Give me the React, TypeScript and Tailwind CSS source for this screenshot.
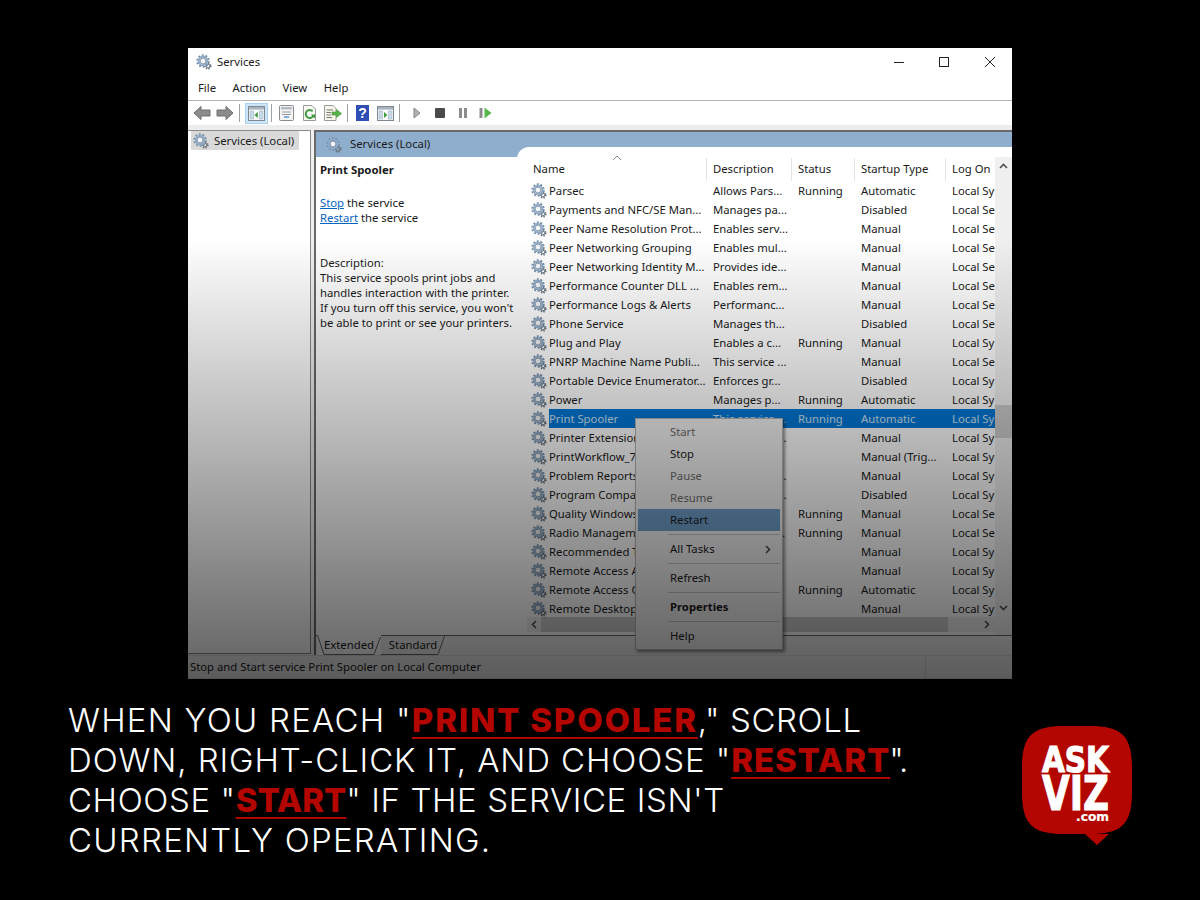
import React from "react";

const UI = "font-['Noto_Sans',sans-serif] text-[11.3px] text-[#1a1a1a]";

type Row = [string, string, string, string, string];

const rows: Row[] = [
  ["Parsec", "Allows Pars...", "Running", "Automatic", "Local Sy"],
  ["Payments and NFC/SE Man...", "Manages pa...", "", "Disabled", "Local Se"],
  ["Peer Name Resolution Prot...", "Enables serv...", "", "Manual", "Local Se"],
  ["Peer Networking Grouping", "Enables mul...", "", "Manual", "Local Se"],
  ["Peer Networking Identity M...", "Provides ide...", "", "Manual", "Local Se"],
  ["Performance Counter DLL ...", "Enables rem...", "", "Manual", "Local Se"],
  ["Performance Logs & Alerts", "Performanc...", "", "Manual", "Local Se"],
  ["Phone Service", "Manages th...", "", "Disabled", "Local Se"],
  ["Plug and Play", "Enables a c...", "Running", "Manual", "Local Sy"],
  ["PNRP Machine Name Publi...", "This service ...", "", "Manual", "Local Se"],
  ["Portable Device Enumerator...", "Enforces gr...", "", "Disabled", "Local Sy"],
  ["Power", "Manages p...", "Running", "Automatic", "Local Sy"],
  ["Print Spooler", "This service ...", "Running", "Automatic", "Local Sy"],
  ["Printer Extensions and...", "This service ...", "", "Manual", "Local Sy"],
  ["PrintWorkflow_7a2f1", "Provides su", "", "Manual (Trig...", "Local Sy"],
  ["Problem Reports Control", "This service ...", "", "Manual", "Local Sy"],
  ["Program Compatibility", "This service ...", "", "Disabled", "Local Sy"],
  ["Quality Windows Audio", "Quality Win", "Running", "Manual", "Local Se"],
  ["Radio Management", "Radio Mana...", "Running", "Manual", "Local Se"],
  ["Recommended Trouble", "Enables aut", "", "Manual", "Local Sy"],
  ["Remote Access Auto", "Creates a c...", "", "Manual", "Local Sy"],
  ["Remote Access Connection", "Manages di", "Running", "Automatic", "Local Sy"],
  ["Remote Desktop Config", "Remote De...", "", "Manual", "Local Sy"],
];

function Gear({ size = 16 }: { size?: number }) {
  return (
    <svg width={size} height={size} viewBox="0 0 16 16" className="shrink-0">
      <circle cx="12" cy="12" r="2.6" fill="none" stroke="#5f6b78" strokeWidth="1.9" strokeDasharray="1.2 1.2" />
      <circle cx="12" cy="12" r="1.9" fill="none" stroke="#6c7783" strokeWidth="1" />
      <circle cx="7" cy="7" r="5.6" fill="none" stroke="#7d92a8" strokeWidth="2.2" strokeDasharray="1.9 1.6" />
      <circle cx="7" cy="7" r="4.3" fill="none" stroke="#8daac8" strokeWidth="1.9" />
      <circle cx="7" cy="7" r="2.9" fill="#f3f6f9" stroke="#5e7288" strokeWidth="0.7" />
    </svg>
  );
}

function Arrow({ flip }: { flip?: boolean }) {
  return (
    <svg width="18" height="16" viewBox="0 0 18 16" className={flip ? "-scale-x-100" : ""}>
      <path d="M1 8 L8 1.5 V5 H17 V11 H8 V14.5 Z" fill="#8c8c8c" stroke="#6e6e6e" strokeWidth="1" strokeLinejoin="round" />
    </svg>
  );
}

function ConsolePanel({ accent }: { accent: "left" | "right" }) {
  return (
    <svg width="17" height="15" viewBox="0 0 17 15">
      <rect x="0.5" y="0.5" width="16" height="14" fill="#fdfdfd" stroke="#7f8890" />
      <rect x="1" y="1" width="15" height="2.6" fill="#a9b4bf" />
      <rect x="2" y="5" width="3.5" height="8" fill="#c8dbe9" stroke="#93a5b5" strokeWidth="0.5" />
      <rect x="11.5" y="5" width="3.5" height="8" fill="#c8dbe9" stroke="#93a5b5" strokeWidth="0.5" />
      {accent === "left" ? (
        <path d="M9.8 6 V12 L6.4 9 Z" fill="#3e9b3e" />
      ) : (
        <path d="M7 6 V12 L10.4 9 Z" fill="#3e9b3e" />
      )}
    </svg>
  );
}

function Sep({ className = "" }: { className?: string }) {
  return <div className={`h-[18px] w-px bg-[#a0a0a0] ${className}`} />;
}

function Cell({ children }: { children: React.ReactNode }) {
  return <div className="flex h-[22px] w-[23px] items-center justify-center">{children}</div>;
}

function Toolbar() {
  return (
    <div className="flex h-[24px] items-center bg-white pl-[2px]">
      <Cell><Arrow /></Cell>
      <Cell><Arrow flip /></Cell>
      <Sep className="mx-[3px]" />
      <div className="ml-[2px] flex h-[21px] w-[23px] items-center justify-center border border-[#a8d2f0] bg-[#cde6f7]">
        <ConsolePanel accent="left" />
      </div>
      <Sep className="mx-[3px]" />
      <Cell>
        <svg width="15" height="16" viewBox="0 0 15 16">
          <rect x="0.5" y="0.5" width="14" height="15" rx="1" fill="#f4f4f4" stroke="#8b8b8b" />
          <rect x="2" y="2" width="11" height="2.5" fill="#b5bcc3" />
          <path d="M3 7 H12 M3 9.5 H12" stroke="#9a9a9a" />
          <path d="M5 12 H10" stroke="#4f90d0" strokeWidth="1.4" />
        </svg>
      </Cell>
      <Cell>
        <svg width="15" height="16" viewBox="0 0 15 16">
          <path d="M1.5 .5 H10 L13.5 4 V15.5 H1.5 Z" fill="#f8f8f4" stroke="#9a9a9a" />
          <path d="M10.6 6.2 A4 4 0 1 0 11.2 11" fill="none" stroke="#3e9b3e" strokeWidth="2" />
          <path d="M8.8 9.4 L13.4 9.4 L13 13.6 Z" fill="#3e9b3e" />
        </svg>
      </Cell>
      <Cell>
        <svg width="18" height="16" viewBox="0 0 18 16">
          <path d="M.5 .5 H9 L12 3.5 V15.5 H.5 Z" fill="#f8f6e8" stroke="#9a9a9a" />
          <path d="M2.5 5 H9 M2.5 7.5 H7 M2.5 10 H7 M2.5 12.5 H8" stroke="#777" />
          <path d="M8 7 H12.5 V4.5 L17.5 8.5 L12.5 12.5 V10 H8 Z" fill="#58b548" stroke="#3f8f35" strokeWidth="0.6" />
        </svg>
      </Cell>
      <Sep className="mx-[3px]" />
      <Cell>
        <div className="flex h-[16px] w-[13px] items-center justify-center bg-[#2f4fb5] font-['Liberation_Sans',sans-serif] text-[14px] font-bold leading-none text-white">?</div>
      </Cell>
      <Cell><ConsolePanel accent="right" /></Cell>
      <Sep className="ml-[2px] mr-[5px]" />
      <Cell>
        <svg width="10" height="12" viewBox="0 0 10 12"><path d="M2 1 L8 6 L2 11 Z" fill="#b0b0b0" stroke="#888" /></svg>
      </Cell>
      <Cell><div className="h-[10px] w-[10px] rounded-[1px] bg-[#4a4a4a]" /></Cell>
      <Cell>
        <div className="flex gap-[2px]">
          <div className="h-[10px] w-[3px] bg-[#8c8c8c]" />
          <div className="h-[10px] w-[3px] bg-[#8c8c8c]" />
        </div>
      </Cell>
      <Cell>
        <svg width="13" height="12" viewBox="0 0 13 12">
          <rect x="0.5" y="1" width="3" height="10" fill="#8c8c8c" />
          <path d="M5.5 .5 L12.5 6 L5.5 11.5 Z" fill="#55b848" />
        </svg>
      </Cell>
    </div>
  );
}

function Chevron({ dir }: { dir: "up" | "down" | "left" | "right" }) {
  const d = {
    up: "M1 6 L4.5 2.5 L8 6",
    down: "M1 3 L4.5 6.5 L8 3",
    left: "M6 1 L2.5 4.5 L6 8",
    right: "M3 1 L6.5 4.5 L3 8",
  }[dir];
  return (
    <svg width="9" height="9" viewBox="0 0 9 9">
      <path d={d} fill="none" stroke="#505050" strokeWidth="1.6" />
    </svg>
  );
}

const COLS = "grid grid-cols-[180px_85px_63px_91px_60px]";

function Table() {
  return (
    <div className="relative flex-1 overflow-visible">
      <div className="flex h-full">
        <div className="w-[468px] overflow-hidden pt-[11px]">
          <div className={`${COLS} relative h-[23px] items-center`}>
            {["Name", "Description", "Status", "Startup Type", "Log On"].map((h) => (
              <div key={h} className="flex h-full items-center border-r border-[#e3e3e3] pl-[6px]">
                {h}
              </div>
            ))}
            {/* sort direction caret on the Name column */}
            <svg width="10" height="6" viewBox="0 0 10 6" className="absolute left-[85px] top-[-3px]">
              <path d="M1 5 L5 1 L9 5" fill="none" stroke="#8a8a8a" strokeWidth="1" />
            </svg>
          </div>
          {rows.map((r) => {
            const selected = r[0] === "Print Spooler";
            return (
              <div key={r[0]} className={`${COLS} h-[19px] items-center whitespace-nowrap`}>
                <div className="flex h-full items-center pl-[4px]">
                  <Gear />
                  <span className={`ml-[2px] flex h-full flex-1 items-center overflow-hidden pt-[1px] ${selected ? "bg-[#0078d7] text-[#d0e4f5]" : ""}`}>
                    {r[0]}
                  </span>
                </div>
                {r.slice(1).map((c, j) => (
                  <div
                    key={j}
                    className={`flex h-full items-center overflow-hidden pl-[6px] pt-[1px] ${selected ? "bg-[#0078d7] text-[#d0e4f5]" : ""}`}
                  >
                    {c}
                  </div>
                ))}
              </div>
            );
          })}
        </div>
        {/* vertical scrollbar */}
        <div className="mt-[10px] flex w-[17px] flex-col items-center bg-[#f0f0f0]">
          <div className="flex h-[18px] items-center"><Chevron dir="up" /></div>
          <div className="mt-[230px] h-[33px] w-full bg-[#cdcdcd]" />
          <div className="mt-auto mb-[19px] flex h-[18px] items-center"><Chevron dir="down" /></div>
        </div>
      </div>
      {/* horizontal scrollbar */}
      <div className="absolute bottom-[3px] left-0 flex h-[15px] w-[468px] items-center bg-[#f0f0f0]">
        <div className="flex w-[14px] justify-center"><Chevron dir="left" /></div>
        <div className="h-full w-[407px] bg-[#cdcdcd]" />
        <div className="ml-auto flex w-[17px] justify-center"><Chevron dir="right" /></div>
      </div>
      <ContextMenu />
    </div>
  );
}

function MenuItem({ label, disabled, active, bold, arrow }: { label: string; disabled?: boolean; active?: boolean; bold?: boolean; arrow?: boolean }) {
  return (
    <div
      className={`flex h-[22px] items-center pl-[32px] pr-[8px] ${disabled ? "text-[#6d6d6d]" : "text-[#1a1a1a]"} ${active ? "bg-[#6f9fca]" : ""} ${bold ? "font-bold" : ""}`}
    >
      {label}
      {arrow && <span className="ml-auto"><Chevron dir="right" /></span>}
    </div>
  );
}

function MenuSep() {
  return <div className="my-[3px] ml-[30px] h-px bg-[#c4c4c4]" />;
}

function ContextMenu() {
  return (
    <div className="absolute left-[108px] top-[271px] w-[148px] border border-[#b5b5b5] bg-[#f2f2f2] p-[2px] shadow-[2px_2px_3px_rgba(0,0,0,0.45)]">
      <MenuItem label="Start" disabled />
      <MenuItem label="Stop" />
      <MenuItem label="Pause" disabled />
      <MenuItem label="Resume" disabled />
      <MenuItem label="Restart" active />
      <MenuSep />
      <MenuItem label="All Tasks" arrow />
      <MenuSep />
      <MenuItem label="Refresh" />
      <MenuSep />
      <MenuItem label="Properties" bold />
      <MenuSep />
      <MenuItem label="Help" />
    </div>
  );
}

function ServicesWindow() {
  return (
    <div className={`relative ml-[188px] flex h-[631px] w-[824px] flex-col bg-white ${UI}`}>
      <div className="flex h-[28px] items-center pl-[8px]">
        <Gear />
        <span className="ml-[5px]">Services</span>
        <div className="ml-auto flex items-center pr-[16px]">
          <div className="h-px w-[10px] bg-[#222]" />
          <div className="ml-[35px] h-[10px] w-[10px] border border-[#222]" />
          <svg width="12" height="12" viewBox="0 0 12 12" className="ml-[35px]">
            <path d="M1 1 L11 11 M11 1 L1 11" stroke="#222" strokeWidth="1" />
          </svg>
        </div>
      </div>
      <div className="flex h-[25px] items-center gap-[16.5px] border-b border-[#b5b5b5] pl-[10px] pt-[1px]">
        <span>File</span>
        <span>Action</span>
        <span>View</span>
        <span>Help</span>
      </div>
      <Toolbar />
      <div className="h-[5px] bg-[#ededed]" />
      <div className="flex min-h-0 flex-1 bg-[#f0f0f0]">
        <div className="mb-[1px] w-[123px] border-r border-b border-t border-[#8a8a8a] bg-white pl-[3px]">
          <div className="flex h-[19px] w-[108px] items-center gap-[5px] bg-[#d9d9d9] pl-[2px]">
            <Gear />
            <span className="pt-[1px]">Services (Local)</span>
          </div>
        </div>
        <div className="ml-[3px] flex flex-1 flex-col border-l-2 border-t-2 border-[#696969]">
          <div className="flex h-[25px] shrink-0 items-center gap-[8px] bg-[#8fadcc] pl-[10px]">
            <Gear />
            <span>Services (Local)</span>
          </div>
          <div className="flex min-h-0 flex-1 bg-white">
            <div className="w-[201px] pl-[4px] pt-[5px] leading-[15px]">
              <div className="text-[11.4px] font-bold">Print Spooler</div>
              <div className="mt-[18px]"><span className="text-[#0563c1] underline">Stop</span> the service</div>
              <div><span className="text-[#0563c1] underline">Restart</span> the service</div>
              <div className="mt-[30px]">Description:</div>
              <div>This service spools print jobs and<br />handles interaction with the printer.<br />If you turn off this service, you won't<br />be able to print or see your printers.</div>
            </div>
            <div className="-mt-[10px] flex flex-1 rounded-tl-[12px] bg-white pl-[10px]">
              <Table />
            </div>
          </div>
          <div className="flex h-[20px] shrink-0 items-start border-t border-[#6a6a6a] bg-[#f0f0f0] pl-[1px]">
            <div className="relative -mt-px flex h-[20px] w-[64px] items-center justify-center bg-white">
              <svg width="64" height="20" viewBox="0 0 64 20" className="absolute inset-0">
                <path d="M.5 0 L7 19.5 H57 L63.5 2" fill="none" stroke="#6a6a6a" />
              </svg>
              Extended
            </div>
            <div className="relative flex h-[19px] w-[64px] items-center justify-center">
              <svg width="64" height="19" viewBox="0 0 64 19" className="absolute inset-0">
                <path d="M0 18.5 H57 L63.5 0" fill="none" stroke="#6a6a6a" />
              </svg>
              Standard
            </div>
          </div>
        </div>
      </div>
      <div className="flex h-[24px] shrink-0 items-center border-t border-b border-[#dcdcdc] bg-[#f0f0f0] pl-[2px]">
        <span>Stop and Start service Print Spooler on Local Computer</span>
        <div className="ml-auto mr-[86px] h-full w-px bg-[#d6d6d6]" />
      </div>
      {/* full-window dimming, light at the top and dark at the foot */}
      <div className="pointer-events-none absolute inset-0 bg-[linear-gradient(to_bottom,transparent_30%,rgba(0,0,0,0.62)_100%)]" />
    </div>
  );
}

function Logo() {
  return (
    <svg width="110" height="120" viewBox="0 0 110 120" className="shrink-0">
      <path
        d="M0 42 C0 10 10 0 42 0 H68 C100 0 110 10 110 42 V66 C110 98 100 108 68 108 H87 L75 119 L63 108 H42 C10 108 0 98 0 66 Z"
        fill="#b30600"
      />
      <g fill="#fff" stroke="#fff" fontFamily="'DejaVu Sans', sans-serif" fontWeight="700">
        <text x="20" y="46" fontSize="35" strokeWidth="1.2" textLength="67" lengthAdjust="spacingAndGlyphs">ASK</text>
        <text x="20" y="84" fontSize="48" strokeWidth="1.2" textLength="67" lengthAdjust="spacingAndGlyphs">VIZ</text>
        <text x="54" y="95" fontSize="12" strokeWidth="0.2" textLength="33" lengthAdjust="spacingAndGlyphs">.com</text>
      </g>
    </svg>
  );
}

function Mark({ children, spacing }: { children: React.ReactNode; spacing: string }) {
  return (
    <span className={`font-extrabold text-[#b30600] underline decoration-2 underline-offset-[5px] ${spacing}`}>{children}</span>
  );
}

export default function App() {
  return (
    <div className="h-[900px] w-[1200px] overflow-hidden bg-black pt-[48px]">
      <ServicesWindow />
      <div className="flex items-start">
        <div className="ml-[68px] mt-[21px] whitespace-nowrap font-['Inter',sans-serif] text-[33px] font-[350] leading-[40px] text-white">
          <div className="tracking-[1.25px]">WHEN YOU REACH "<Mark spacing="tracking-[1.8px]">PRINT SPOOLER</Mark><span className="tracking-[0.6px]">," SCROLL</span></div>
          <div className="tracking-[0.9px]">DOWN, RIGHT-CLICK IT, AND CHOOSE "<Mark spacing="tracking-[0.9px]">RESTART</Mark><span className="-ml-[1px] tracking-[-2px]">".</span></div>
          <div className="tracking-[0.6px]">CHOOSE "<Mark spacing="tracking-[0px]">START</Mark>" IF THE SERVICE ISN'T</div>
          <div className="tracking-[1.25px]">CURRENTLY OPERATING.</div>
        </div>
        <div className="ml-auto mr-[68px] mt-[47px]">
          <Logo />
        </div>
      </div>
    </div>
  );
}
